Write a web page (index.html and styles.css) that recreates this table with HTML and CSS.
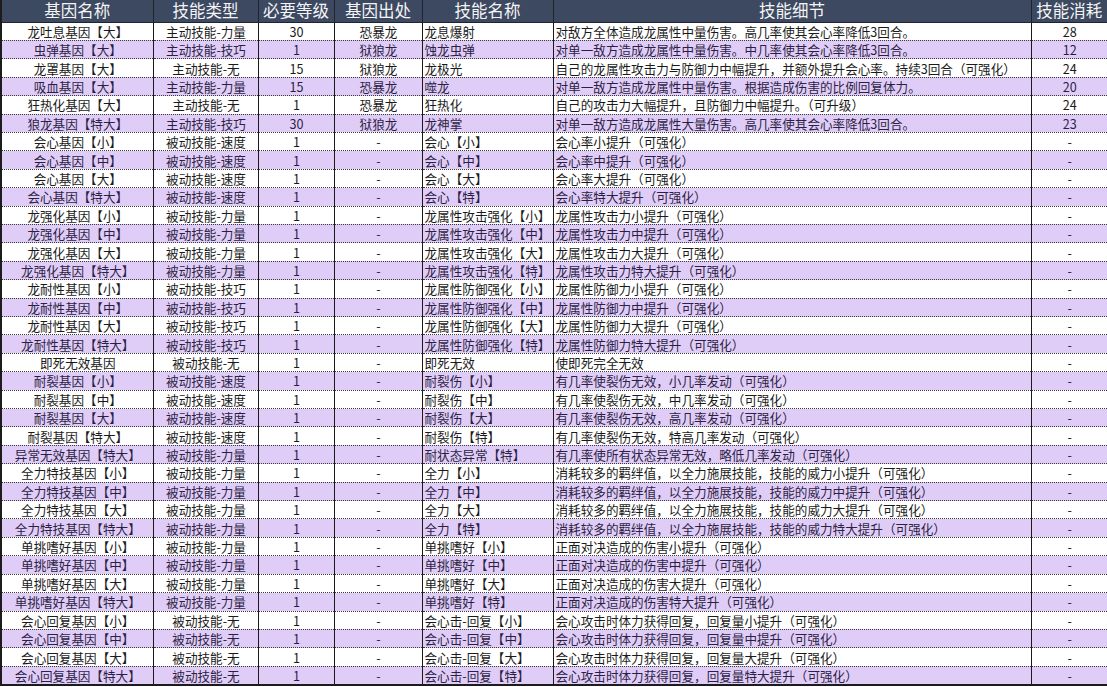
FILE: index.html
```html
<!DOCTYPE html>
<html lang="zh-CN">
<head>
<meta charset="utf-8">
<title>基因技能表</title>
<link rel="stylesheet" href="styles.css">
</head>
<body>
<table class="gene-table">
<colgroup>
<col class="c1"><col class="c2"><col class="c3"><col class="c4"><col class="c5"><col class="c6"><col class="c7">
</colgroup>
<thead>
<tr><th>基因名称</th><th>技能类型</th><th>必要等级</th><th>基因出处</th><th>技能名称</th><th>技能细节</th><th>技能消耗</th></tr>
</thead>
<tbody>
<tr><td>龙吐息基因【大】</td><td>主动技能-力量</td><td>30</td><td>恐暴龙</td><td class="l">龙息爆射</td><td class="l">对敌方全体造成龙属性中量伤害。高几率使其会心率降低3回合。</td><td>28</td></tr>
<tr class="alt"><td>虫弹基因【大】</td><td>主动技能-技巧</td><td>1</td><td>狱狼龙</td><td class="l">蚀龙虫弹</td><td class="l">对单一敌方造成龙属性中量伤害。中几率使其会心率降低3回合。</td><td>12</td></tr>
<tr><td>龙罩基因【大】</td><td>主动技能-无</td><td>15</td><td>狱狼龙</td><td class="l">龙极光</td><td class="l">自己的龙属性攻击力与防御力中幅提升，并额外提升会心率。持续3回合（可强化）</td><td>24</td></tr>
<tr class="alt"><td>吸血基因【大】</td><td>主动技能-力量</td><td>15</td><td>恐暴龙</td><td class="l">噬龙</td><td class="l">对单一敌方造成龙属性中量伤害。根据造成伤害的比例回复体力。</td><td>20</td></tr>
<tr><td>狂热化基因【大】</td><td>主动技能-无</td><td>1</td><td>恐暴龙</td><td class="l">狂热化</td><td class="l">自己的攻击力大幅提升，且防御力中幅提升。（可升级）</td><td>24</td></tr>
<tr class="alt"><td>狼龙基因【特大】</td><td>主动技能-技巧</td><td>30</td><td>狱狼龙</td><td class="l">龙神掌</td><td class="l">对单一敌方造成龙属性大量伤害。高几率使其会心率降低3回合。</td><td>23</td></tr>
<tr><td>会心基因【小】</td><td>被动技能-速度</td><td>1</td><td>-</td><td class="l">会心【小】</td><td class="l">会心率小提升（可强化）</td><td>-</td></tr>
<tr class="alt"><td>会心基因【中】</td><td>被动技能-速度</td><td>1</td><td>-</td><td class="l">会心【中】</td><td class="l">会心率中提升（可强化）</td><td>-</td></tr>
<tr><td>会心基因【大】</td><td>被动技能-速度</td><td>1</td><td>-</td><td class="l">会心【大】</td><td class="l">会心率大提升（可强化）</td><td>-</td></tr>
<tr class="alt"><td>会心基因【特大】</td><td>被动技能-速度</td><td>1</td><td>-</td><td class="l">会心【特】</td><td class="l">会心率特大提升（可强化）</td><td>-</td></tr>
<tr><td>龙强化基因【小】</td><td>被动技能-力量</td><td>1</td><td>-</td><td class="l">龙属性攻击强化【小】</td><td class="l">龙属性攻击力小提升（可强化）</td><td>-</td></tr>
<tr class="alt"><td>龙强化基因【中】</td><td>被动技能-力量</td><td>1</td><td>-</td><td class="l">龙属性攻击强化【中】</td><td class="l">龙属性攻击力中提升（可强化）</td><td>-</td></tr>
<tr><td>龙强化基因【大】</td><td>被动技能-力量</td><td>1</td><td>-</td><td class="l">龙属性攻击强化【大】</td><td class="l">龙属性攻击力大提升（可强化）</td><td>-</td></tr>
<tr class="alt"><td>龙强化基因【特大】</td><td>被动技能-力量</td><td>1</td><td>-</td><td class="l">龙属性攻击强化【特】</td><td class="l">龙属性攻击力特大提升（可强化）</td><td>-</td></tr>
<tr><td>龙耐性基因【小】</td><td>被动技能-技巧</td><td>1</td><td>-</td><td class="l">龙属性防御强化【小】</td><td class="l">龙属性防御力小提升（可强化）</td><td>-</td></tr>
<tr class="alt"><td>龙耐性基因【中】</td><td>被动技能-技巧</td><td>1</td><td>-</td><td class="l">龙属性防御强化【中】</td><td class="l">龙属性防御力中提升（可强化）</td><td>-</td></tr>
<tr><td>龙耐性基因【大】</td><td>被动技能-技巧</td><td>1</td><td>-</td><td class="l">龙属性防御强化【大】</td><td class="l">龙属性防御力大提升（可强化）</td><td>-</td></tr>
<tr class="alt"><td>龙耐性基因【特大】</td><td>被动技能-技巧</td><td>1</td><td>-</td><td class="l">龙属性防御强化【特】</td><td class="l">龙属性防御力特大提升（可强化）</td><td>-</td></tr>
<tr><td>即死无效基因</td><td>被动技能-无</td><td>1</td><td>-</td><td class="l">即死无效</td><td class="l">使即死完全无效</td><td>-</td></tr>
<tr class="alt"><td>耐裂基因【小】</td><td>被动技能-速度</td><td>1</td><td>-</td><td class="l">耐裂伤【小】</td><td class="l">有几率使裂伤无效，小几率发动（可强化）</td><td>-</td></tr>
<tr><td>耐裂基因【中】</td><td>被动技能-速度</td><td>1</td><td>-</td><td class="l">耐裂伤【中】</td><td class="l">有几率使裂伤无效，中几率发动（可强化）</td><td>-</td></tr>
<tr class="alt"><td>耐裂基因【大】</td><td>被动技能-速度</td><td>1</td><td>-</td><td class="l">耐裂伤【大】</td><td class="l">有几率使裂伤无效，高几率发动（可强化）</td><td>-</td></tr>
<tr><td>耐裂基因【特大】</td><td>被动技能-速度</td><td>1</td><td>-</td><td class="l">耐裂伤【特】</td><td class="l">有几率使裂伤无效，特高几率发动（可强化）</td><td>-</td></tr>
<tr class="alt"><td>异常无效基因【特大】</td><td>被动技能-力量</td><td>1</td><td>-</td><td class="l">耐状态异常【特】</td><td class="l">有几率使所有状态异常无效，略低几率发动（可强化）</td><td>-</td></tr>
<tr><td>全力特技基因【小】</td><td>被动技能-力量</td><td>1</td><td>-</td><td class="l">全力【小】</td><td class="l">消耗较多的羁绊值，以全力施展技能，技能的威力小提升（可强化）</td><td>-</td></tr>
<tr class="alt"><td>全力特技基因【中】</td><td>被动技能-力量</td><td>1</td><td>-</td><td class="l">全力【中】</td><td class="l">消耗较多的羁绊值，以全力施展技能，技能的威力中提升（可强化）</td><td>-</td></tr>
<tr><td>全力特技基因【大】</td><td>被动技能-力量</td><td>1</td><td>-</td><td class="l">全力【大】</td><td class="l">消耗较多的羁绊值，以全力施展技能，技能的威力大提升（可强化）</td><td>-</td></tr>
<tr class="alt"><td>全力特技基因【特大】</td><td>被动技能-力量</td><td>1</td><td>-</td><td class="l">全力【特】</td><td class="l">消耗较多的羁绊值，以全力施展技能，技能的威力特大提升（可强化）</td><td>-</td></tr>
<tr><td>单挑嗜好基因【小】</td><td>被动技能-力量</td><td>1</td><td>-</td><td class="l">单挑嗜好【小】</td><td class="l">正面对决造成的伤害小提升（可强化）</td><td>-</td></tr>
<tr class="alt"><td>单挑嗜好基因【中】</td><td>被动技能-力量</td><td>1</td><td>-</td><td class="l">单挑嗜好【中】</td><td class="l">正面对决造成的伤害中提升（可强化）</td><td>-</td></tr>
<tr><td>单挑嗜好基因【大】</td><td>被动技能-力量</td><td>1</td><td>-</td><td class="l">单挑嗜好【大】</td><td class="l">正面对决造成的伤害大提升（可强化）</td><td>-</td></tr>
<tr class="alt"><td>单挑嗜好基因【特大】</td><td>被动技能-力量</td><td>1</td><td>-</td><td class="l">单挑嗜好【特】</td><td class="l">正面对决造成的伤害特大提升（可强化）</td><td>-</td></tr>
<tr><td>会心回复基因【小】</td><td>被动技能-无</td><td>1</td><td>-</td><td class="l">会心击-回复【小】</td><td class="l">会心攻击时体力获得回复，回复量小提升（可强化）</td><td>-</td></tr>
<tr class="alt"><td>会心回复基因【中】</td><td>被动技能-无</td><td>1</td><td>-</td><td class="l">会心击-回复【中】</td><td class="l">会心攻击时体力获得回复，回复量中提升（可强化）</td><td>-</td></tr>
<tr><td>会心回复基因【大】</td><td>被动技能-无</td><td>1</td><td>-</td><td class="l">会心击-回复【大】</td><td class="l">会心攻击时体力获得回复，回复量大提升（可强化）</td><td>-</td></tr>
<tr class="alt"><td>会心回复基因【特大】</td><td>被动技能-无</td><td>1</td><td>-</td><td class="l">会心击-回复【特】</td><td class="l">会心攻击时体力获得回复，回复量特大提升（可强化）</td><td>-</td></tr>
</tbody>
</table>
</body>
</html>
```
FILE: styles.css
```css
html, body {
  margin: 0;
  padding: 0;
  background: #ffffff;
}

.gene-table {
  width: 1107px;
  table-layout: fixed;
  border-collapse: collapse;
  font-family: "Noto Sans CJK SC", "Noto Sans", sans-serif;
  font-size: 12.6px;
  color: #1a1a1a;
  border-left: 2px solid #1c1c1c;
  border-right: 2px solid #1c1c1c;
  border-bottom: 2px solid #1c1c1c;
}

.c1 { width: 152px; }
.c2 { width: 105px; }
.c3 { width: 76px; }
.c4 { width: 88px; }
.c5 { width: 131px; }
.c6 { width: 478px; }
.c7 { width: 77px; }

.gene-table thead tr {
  height: 22px;
  background: #3c4960;
}

.gene-table th {
  padding: 0;
  font-weight: normal;
  font-size: 16.5px;
  line-height: 21px;
  color: #f4f4f6;
  border-left: 1px solid #1e2430;
  border-bottom: 1px solid #1e2430;
  white-space: nowrap;
}

.gene-table tbody tr {
  height: 18.42px;
  background: #ffffff;
}

.gene-table tbody tr.alt {
  background: #e0cdf7;
  color: #2c1f44;
}

.gene-table td {
  padding: 0 0 0 1px;
  text-align: center;
  line-height: 17px;
  white-space: nowrap;
  border-left: 1px solid #1a1a1a;
  border-bottom: 1px dotted #3a3a3a;
}

.gene-table td.l {
  text-align: left;
  padding-left: 2px;
}
```
